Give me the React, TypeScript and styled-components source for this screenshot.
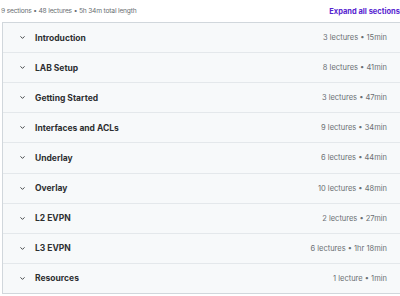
import React from 'react';
import styled, { createGlobalStyle } from 'styled-components';

const GlobalStyle = createGlobalStyle`
  html, body {
    margin: 0;
    padding: 0;
    background: #ffffff;
    font-family: Inter, "Noto Sans", sans-serif;
    color: #2d2f31;
  }
`;

const Page = styled.div`
  width: 400px;
  height: 296px;
  overflow: hidden;
`;

const Header = styled.div`
  display: flex;
  justify-content: space-between;
  align-items: center;
  height: 22px;
  padding-left: 1px;
  font-size: 6.7px;
  letter-spacing: -0.2px;
  color: #6a6f73;
`;

const ExpandAll = styled.button`
  border: none;
  background: none;
  padding: 0;
  font-family: inherit;
  font-size: 7.5px;
  font-weight: 700;
  letter-spacing: 0;
  color: #5624d0;
  cursor: pointer;
  white-space: nowrap;
`;

const Sections = styled.div`
  margin-left: 2px;
  width: 410px;
  border: 1px solid #d1d7dc;
  border-right: none;
`;

const Row = styled.div`
  display: flex;
  align-items: center;
  height: 29.12px;
  padding: 0 12px 0 16px;
  background: #f7f9fa;
  & + & {
    border-top: 1px solid #e4e8eb;
  }
`;

const Chevron = styled.svg`
  width: 7px;
  height: 7px;
  margin-right: 9px;
  flex: none;
`;

const Title = styled.div`
  flex: 1;
  font-size: 8.5px;
  font-weight: 700;
  color: #2d2f31;
`;

const Meta = styled.div`
  font-size: 7.5px;
  color: #6a6f73;
  width: 148px;
  margin-right: 14px;
  text-align: right;
`;

const sections = [
  { title: 'Introduction', meta: '3 lectures • 15min' },
  { title: 'LAB Setup', meta: '8 lectures • 41min' },
  { title: 'Getting Started', meta: '3 lectures • 47min' },
  { title: 'Interfaces and ACLs', meta: '9 lectures • 34min' },
  { title: 'Underlay', meta: '6 lectures • 44min' },
  { title: 'Overlay', meta: '10 lectures • 48min' },
  { title: 'L2 EVPN', meta: '2 lectures • 27min' },
  { title: 'L3 EVPN', meta: '6 lectures • 1hr 18min' },
  { title: 'Resources', meta: '1 lecture • 1min' },
];

export default function App() {
  return (
    <Page>
      <GlobalStyle />
      <Header>
        <span>9 sections • 48 lectures • 5h 34m total length</span>
        <ExpandAll>Expand all sections</ExpandAll>
      </Header>
      <Sections>
        {sections.map(s => (
          <Row key={s.title}>
            <Chevron viewBox="0 0 24 24" fill="none" stroke="#2d2f31" strokeWidth="3" strokeLinecap="round" strokeLinejoin="round">
              <path d="M6 9l6 6 6-6" />
            </Chevron>
            <Title>{s.title}</Title>
            <Meta>{s.meta}</Meta>
          </Row>
        ))}
      </Sections>
    </Page>
  );
}
